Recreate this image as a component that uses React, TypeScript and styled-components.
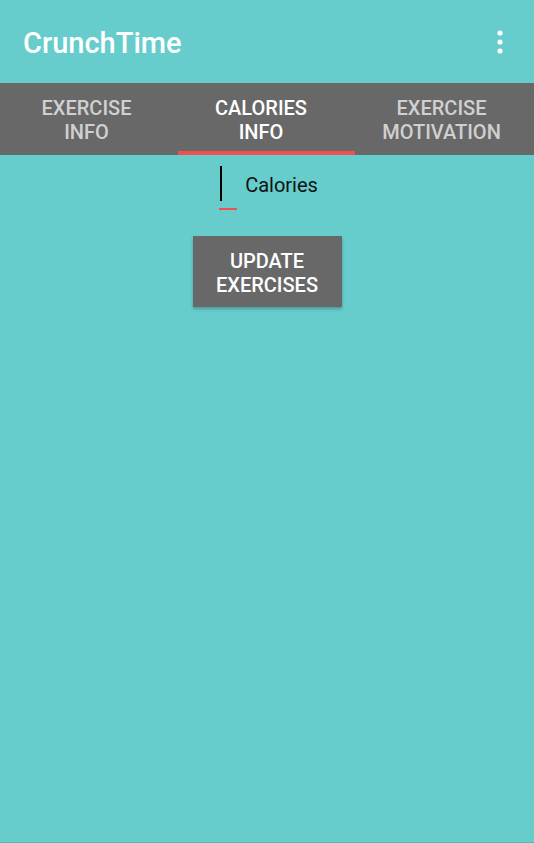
import styled, { createGlobalStyle } from 'styled-components';

const GlobalStyle = createGlobalStyle`
  html, body { margin: 0; padding: 0; }
  body {
    background: #66cdcc;
    font-family: Roboto, "Noto Sans", sans-serif;
  }
`;

const Screen = styled.div`
  width: 534px;
  height: 843px;
  background: #66cdcc;
  border-bottom: 1px solid #58b5b4;
  box-sizing: border-box;
  display: flex;
  flex-direction: column;
`;

const AppBar = styled.div`
  height: 83px;
  display: flex;
  align-items: center;
  justify-content: space-between;
  padding: 0 31px 0 23px;
  box-sizing: border-box;
`;

const Title = styled.div`
  color: #fff;
  font-size: 29px;
  font-weight: 500;
  margin-top: 2px;
`;

const Tabs = styled.div`
  height: 72px;
  background: #686868;
  display: grid;
  grid-template-columns: 173px 176px 1fr;
`;

const Tab = styled.div<{ $active?: boolean }>`
  position: relative;
  display: flex;
  align-items: center;
  justify-content: center;
  text-align: center;
  font-size: 20px;
  font-weight: 500;
  line-height: 24px;
  padding-top: 1px;
  color: ${(p) => (p.$active ? '#ffffff' : '#d0d0d0')};
  &::after {
    content: '';
    position: absolute;
    left: 5px;
    right: -6px;
    bottom: 0;
    height: 4px;
    background: ${(p) => (p.$active ? '#f44f4f' : 'transparent')};
  }
`;

const Body = styled.div`
  display: flex;
  flex-direction: column;
  align-items: center;
  padding-top: 11px;
`;

const Field = styled.div`
  display: flex;
  align-items: flex-start;
  gap: 8px;
  margin-left: 3px;
`;

const InputBox = styled.div`
  position: relative;
  width: 18px;
  height: 44px;
  &::before {
    content: '';
    position: absolute;
    left: 1px;
    top: 0;
    width: 2px;
    height: 35px;
    background: #000;
  }
  &::after {
    content: '';
    position: absolute;
    left: 0;
    top: 42px;
    width: 18px;
    height: 2px;
    background: #f44f4f;
  }
`;

const Hint = styled.div`
  font-size: 20px;
  color: #111;
  margin-top: 7px;
`;

const Button = styled.button`
  margin-top: 26px;
  width: 149px;
  height: 71px;
  background: #686868;
  border: none;
  color: #fff;
  font-family: Roboto, "Noto Sans", sans-serif;
  font-size: 20px;
  font-weight: 500;
  line-height: 24px;
  box-shadow: 0 2px 3px rgba(0, 0, 0, 0.25);
  padding: 3px 0 0;
`;

const MenuIcon = () => (
  <svg width="6" height="24" viewBox="0 0 6 24">
    <circle cx="3" cy="3" r="2.6" fill="#fff" />
    <circle cx="3" cy="12" r="2.6" fill="#fff" />
    <circle cx="3" cy="21" r="2.6" fill="#fff" />
  </svg>
);

export default function App() {
  return (
    <>
      <GlobalStyle />
      <Screen>
        <AppBar>
          <Title>CrunchTime</Title>
          <MenuIcon />
        </AppBar>
        <Tabs>
          <Tab>EXERCISE<br />INFO</Tab>
          <Tab $active>CALORIES<br />INFO</Tab>
          <Tab>EXERCISE<br />MOTIVATION</Tab>
        </Tabs>
        <Body>
          <Field>
            <InputBox />
            <Hint>Calories</Hint>
          </Field>
          <Button>UPDATE<br />EXERCISES</Button>
        </Body>
      </Screen>
    </>
  );
}
